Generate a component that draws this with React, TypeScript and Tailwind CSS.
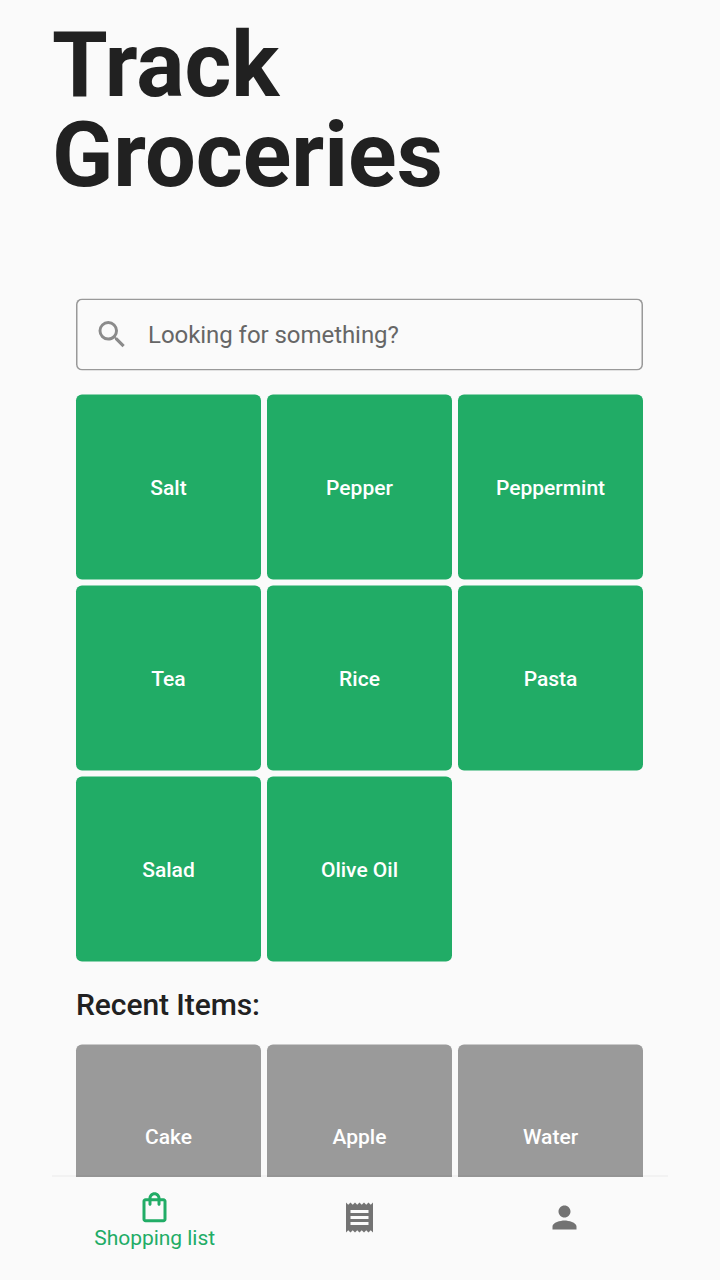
import { MdSearch, MdReceipt, MdPerson, MdOutlineShoppingBag } from "react-icons/md";

const items = ["Salt", "Pepper", "Peppermint", "Tea", "Rice", "Pasta", "Salad", "Olive Oil"];
const recent = ["Cake", "Apple", "Water"];

function Tile({ label, recent }: { label: string; recent?: boolean }) {
  return (
    <button
      className={`flex h-[185px] -translate-y-[0.4px] items-center justify-center rounded-[6px] text-[21px] leading-6 font-medium text-white ${
        recent ? "bg-[#9a9a9a]" : "bg-[#21ac66] pt-px"
      }`}
    >
      {label}
    </button>
  );
}

export default function App() {
  return (
    <div className="flex h-[1280px] w-[720px] flex-col overflow-hidden bg-[#fafafa] px-[52px] font-[Roboto,sans-serif] text-[#212121]">
      <main className="min-h-0 flex-1 overflow-hidden">
        <h1 className="pt-[21px] text-[90px] leading-[90px] font-bold">
          Track
          <br />
          Groceries
        </h1>
        <div className="mt-[98px] px-6">
          <label className="flex h-[72px] w-[567px] -translate-y-[0.4px] items-center rounded-[6px] pl-[18px] shadow-[inset_0_0_0_1.5px_#999999]">
            <MdSearch className="size-9 shrink-0 text-[#8b8b8b]" />
            <input
              className="ml-[18px] flex-1 bg-transparent text-[24px] tracking-[-0.05px] outline-none placeholder:text-[#666666]"
              placeholder="Looking for something?"
            />
          </label>
          <div className="mt-[24px] grid w-[567px] grid-cols-3 gap-[6px]">
            {items.map((name) => (
              <Tile key={name} label={name} />
            ))}
          </div>
          <h2 className="mt-[25px] text-[30px] leading-9 font-medium tracking-[-0.07px]">Recent Items:</h2>
          <div className="mt-[21.5px] grid w-[567px] grid-cols-3 gap-[6px]">
            {recent.map((name) => (
              <Tile key={name} label={name} recent />
            ))}
          </div>
        </div>
      </main>
      <nav className="relative grid h-[103px] shrink-0 grid-cols-3 bg-[#fafafa] text-[#737373]">
        <div className="absolute -top-[2px] left-0 h-[2px] w-full bg-black/[0.03]" />
        <a className="flex flex-col items-center pt-3 text-[#21ac66]">
          <MdOutlineShoppingBag className="size-9 -translate-x-[0.5px] translate-y-[0.3px]" />
          <span className="pt-px text-[21px] leading-6 tracking-[-0.04px]">Shopping list</span>
        </a>
        <a className="flex justify-center pt-[23px]">
          <MdReceipt className="size-9 -translate-x-[0.5px] -translate-y-[0.5px]" />
        </a>
        <a className="flex justify-center pt-[23px]">
          <MdPerson className="size-9 -translate-x-[0.5px] -translate-y-[0.5px]" />
        </a>
      </nav>
    </div>
  );
}
